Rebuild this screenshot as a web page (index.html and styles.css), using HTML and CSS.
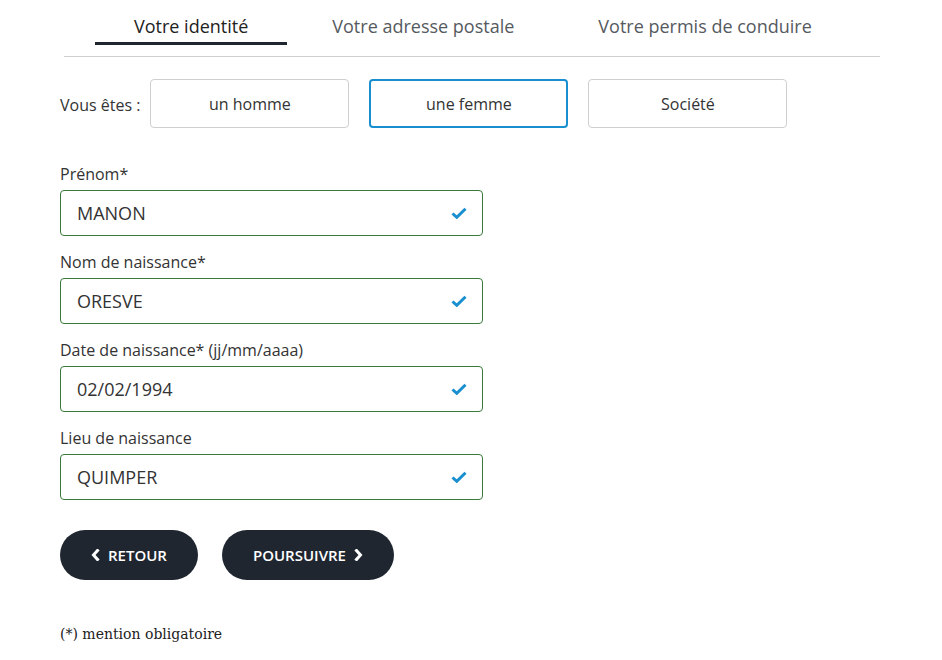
FILE: index.html
```html
<!DOCTYPE html>
<html lang="fr">
<head>
<meta charset="utf-8">
<link rel="stylesheet" href="styles.css">
</head>
<body>
<div class="page">
  <nav class="tabs">
    <div class="tab active">Votre identité</div>
    <div class="tab">Votre adresse postale</div>
    <div class="tab">Votre permis de conduire</div>
  </nav>
  <div class="civ">
    <span class="civ-label">Vous êtes :</span>
    <button class="choice">un homme</button>
    <button class="choice selected">une femme</button>
    <button class="choice">Société</button>
  </div>
  <form class="fields">
    <div class="field">
      <label>Prénom*</label>
      <div class="input"><span>MANON</span><svg class="check" viewBox="0 0 16 12"><path d="M1.5 6.5 L5.8 10.3 L14.5 1.8" fill="none" stroke="#1a8fd0" stroke-width="3"/></svg></div>
    </div>
    <div class="field">
      <label>Nom de naissance*</label>
      <div class="input"><span>ORESVE</span><svg class="check" viewBox="0 0 16 12"><path d="M1.5 6.5 L5.8 10.3 L14.5 1.8" fill="none" stroke="#1a8fd0" stroke-width="3"/></svg></div>
    </div>
    <div class="field">
      <label>Date de naissance* (jj/mm/aaaa)</label>
      <div class="input"><span>02/02/1994</span><svg class="check" viewBox="0 0 16 12"><path d="M1.5 6.5 L5.8 10.3 L14.5 1.8" fill="none" stroke="#1a8fd0" stroke-width="3"/></svg></div>
    </div>
    <div class="field">
      <label>Lieu de naissance</label>
      <div class="input"><span>QUIMPER</span><svg class="check" viewBox="0 0 16 12"><path d="M1.5 6.5 L5.8 10.3 L14.5 1.8" fill="none" stroke="#1a8fd0" stroke-width="3"/></svg></div>
    </div>
  </form>
  <div class="actions">
    <button class="btn"><svg class="chev" viewBox="0 0 9 12"><path d="M6.5 1.5 L2.5 6 L6.5 10.5" fill="none" stroke="#fff" stroke-width="3" stroke-linecap="square"/></svg>RETOUR</button>
    <button class="btn">POURSUIVRE<svg class="chev" viewBox="0 0 9 12"><path d="M2.5 1.5 L6.5 6 L2.5 10.5" fill="none" stroke="#fff" stroke-width="3" stroke-linecap="square"/></svg></button>
  </div>
  <p class="note">(*) mention obligatoire</p>
</div>
</body>
</html>
```
FILE: styles.css
```css
* { box-sizing: border-box; }
html, body { margin: 0; padding: 0; background: #fff; }
body { font-family: "Open Sans", sans-serif; color: #333; }
.page { padding: 0 0 0 60px; }
.tabs {
  display: flex;
  gap: 6px;
  margin-left: 4px;
  width: 816px;
  padding-left: 31px;
  border-bottom: 1px solid #cfcfcf;
  padding-top: 14px;
  height: 57px;
}
.tab {
  padding: 0 39px;
  font-size: 18px;
  color: #555a60;
  height: 31px;
  line-height: 24px;
  white-space: nowrap;
}
.tab.active { color: #222; border-bottom: 3px solid #1f2630; }
.civ { display: flex; align-items: center; margin-top: 22px; gap: 20px; }
.civ-label { font-size: 16px; color: #333; margin-right: -10px; margin-top: 2px; }
.choice {
  width: 199px; height: 49px;
  background: #fff;
  border: 1px solid #cfcfcf;
  border-radius: 4px;
  font-family: "Open Sans", sans-serif;
  font-size: 16px;
  color: #333;
}
.choice.selected { border: 2px solid #1a8fd0; }
.fields { margin-top: 36px; display: flex; flex-direction: column; gap: 16px; }
.field label { display: block; font-size: 16px; color: #333; line-height: 20px; margin-bottom: 6px; }
.input {
  width: 423px; height: 46px;
  border: 1px solid #3a7a3a;
  border-radius: 4px;
  display: flex; align-items: center; justify-content: space-between;
  padding: 0 15px 0 16px;
  font-size: 18px; color: #333;
}
.check { width: 16px; height: 12px; }
.actions { display: flex; gap: 24px; margin-top: 30px; }
.btn {
  height: 50px; border: 0; border-radius: 25px;
  background: #1f2630; color: #fff;
  font-family: "Open Sans", sans-serif; font-size: 15px; font-weight: 600;
  display: flex; align-items: center; gap: 8px;
  padding: 0 31px;
}
.chev { width: 9px; height: 12px; }
.note { font-family: "DejaVu Serif", serif; font-size: 14px; color: #222; margin: 46px 0 0; }
```
